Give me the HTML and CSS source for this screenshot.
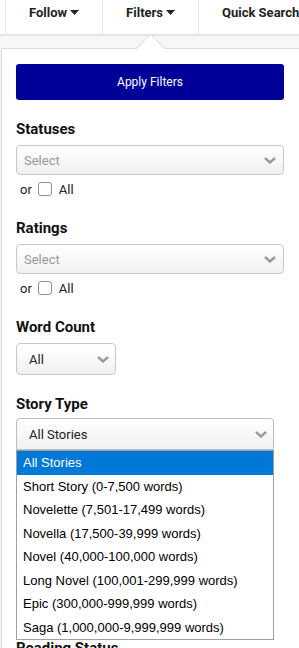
FILE: index.html
```html
<!DOCTYPE html>
<html lang="en">
<head>
<meta charset="utf-8">
<title>Filters</title>
<link rel="stylesheet" href="styles.css">
</head>
<body>
<nav class="tabs">
  <div class="tab">Follow <svg class="caret" width="9" height="5" viewBox="0 0 9 5"><path d="M0 0H9L4.5 5Z" fill="#222"/></svg></div>
  <div class="tab">Filters <svg class="caret" width="9" height="5" viewBox="0 0 9 5"><path d="M0 0H9L4.5 5Z" fill="#222"/></svg></div>
  <div class="tab">Quick Search</div>
</nav>
<div class="shade"></div>
<section class="panel">
  <span class="notch"></span>
  <button class="apply">Apply Filters</button>

  <div class="group">
    <div class="label">Statuses</div>
    <div class="select select-multi"><span class="placeholder">Select</span><svg class="chev" width="12" height="7" viewBox="0 0 12 7"><polyline points="1,1 6,5.5 11,1" fill="none" stroke="#9a9a9a" stroke-width="2.4"/></svg></div>
    <label class="or-row">or <input type="checkbox" class="check"> All</label>
  </div>

  <div class="group">
    <div class="label">Ratings</div>
    <div class="select select-multi"><span class="placeholder">Select</span><svg class="chev" width="12" height="7" viewBox="0 0 12 7"><polyline points="1,1 6,5.5 11,1" fill="none" stroke="#9a9a9a" stroke-width="2.4"/></svg></div>
    <label class="or-row">or <input type="checkbox" class="check"> All</label>
  </div>

  <div class="group group-compact">
    <div class="label">Word Count</div>
    <div class="select select-native select-small"><span>All</span><svg class="chev" width="12" height="7" viewBox="0 0 12 7"><polyline points="1,1 6,5.5 11,1" fill="none" stroke="#9a9a9a" stroke-width="2.4"/></svg></div>
  </div>

  <div class="group group-last">
    <div class="label label-tight">Story Type</div>
    <div class="select select-native select-wide"><span>All Stories</span><svg class="chev" width="12" height="7" viewBox="0 0 12 7"><polyline points="1,1 6,5.5 11,1" fill="none" stroke="#9a9a9a" stroke-width="2.4"/></svg></div>
    <ul class="options">
      <li class="opt opt-active">All Stories</li>
      <li class="opt">Short Story (0-7,500 words)</li>
      <li class="opt">Novelette (7,501-17,499 words)</li>
      <li class="opt">Novella (17,500-39,999 words)</li>
      <li class="opt">Novel (40,000-100,000 words)</li>
      <li class="opt">Long Novel (100,001-299,999 words)</li>
      <li class="opt">Epic (300,000-999,999 words)</li>
      <li class="opt">Saga (1,000,000-9,999,999 words)</li>
    </ul>
  </div>

  <div class="group">
    <div class="label">Reading Status</div>
  </div>
</section>
</body>
</html>
```
FILE: styles.css
```css
html, body {
  margin: 0;
  padding: 0;
}
body {
  background: #f4f4f4;
  font-family: Roboto, "Liberation Sans", sans-serif;
  color: #222;
  overflow: hidden;
}
.tabs {
  display: flex;
  height: 34px;
  padding-left: 5px;
  background: #fff;
  border-bottom: 2px solid #e4e4e4;
  white-space: nowrap;
  overflow: hidden;
}
.tab {
  display: flex;
  align-items: flex-start;
  gap: 3px;
  padding: 5px 23px 0;
  border-left: 1px solid #e6e6e6;
  font-weight: 700;
  font-size: 13px;
  line-height: 15px;
  color: #222;
}
.caret {
  margin-top: 5px;
}
.shade {
  height: 12px;
  background: #f7f7f7;
}
.panel {
  position: relative;
  margin-left: 1px;
  background: #fff;
  border-top: 1px solid #dcdcdc;
  border-left: 1px solid #dcdcdc;
  padding: 15px 15px 0 14px;
  min-height: 620px;
}
.notch {
  position: absolute;
  top: -11px;
  left: 138px;
  width: 20px;
  height: 20px;
  background: #fff;
  border-top: 1px solid #dcdcdc;
  border-left: 1px solid #dcdcdc;
  transform: rotate(45deg);
}
.apply {
  position: relative;
  display: block;
  width: 100%;
  height: 36px;
  margin: 0 0 21px;
  border: none;
  border-radius: 3px;
  background: #000099;
  color: #fff;
  font-family: Roboto, sans-serif;
  font-size: 12px;
}
.group {
  margin-bottom: 23px;
}
.group-compact {
  margin-bottom: 21px;
}
.group-last {
  margin-bottom: 0;
}
.label {
  font-weight: 700;
  font-size: 15px;
  line-height: 17px;
  color: #111;
  margin-bottom: 7px;
}
.label-tight {
  margin-bottom: 5px;
}
.select {
  display: flex;
  align-items: center;
  justify-content: space-between;
  box-sizing: border-box;
  border: 1px solid #c8c8c8;
  border-radius: 4px;
  background: linear-gradient(to bottom, #ffffff 0%, #f1f1f1 100%);
  font-size: 13px;
  color: #222;
}
.select-multi {
  height: 30px;
  padding: 0 7px 0 7px;
}
.placeholder {
  color: #999;
}
.select-native {
  height: 32px;
  padding: 0 6px 0 12px;
}
.select-small {
  width: 100px;
}
.select-wide {
  width: 258px;
  border-radius: 4px 4px 0 0;
  border-color: #bdbdbd;
}
.or-row {
  display: flex;
  align-items: center;
  height: 16px;
  margin-top: 6px;
  padding-left: 4px;
  font-size: 13px;
  color: #222;
}
.check {
  appearance: none;
  -webkit-appearance: none;
  box-sizing: border-box;
  width: 14px;
  height: 14px;
  margin: 0 7px 0 6px;
  border: 1px solid #8f8f8f;
  border-radius: 3px;
  background: #fff;
}
.options {
  list-style: none;
  margin: 0;
  padding: 0;
  width: 258px;
  box-sizing: border-box;
  border: 1px solid #a0a0a0;
  background: #fff;
  font-family: "Liberation Sans", Arial, sans-serif;
  font-size: 13px;
  color: #000;
}
.opt {
  height: 23.5px;
  line-height: 23.5px;
  padding-left: 6px;
  white-space: nowrap;
}
.opt-active {
  background: #0078d7;
  color: #fff;
}
```
